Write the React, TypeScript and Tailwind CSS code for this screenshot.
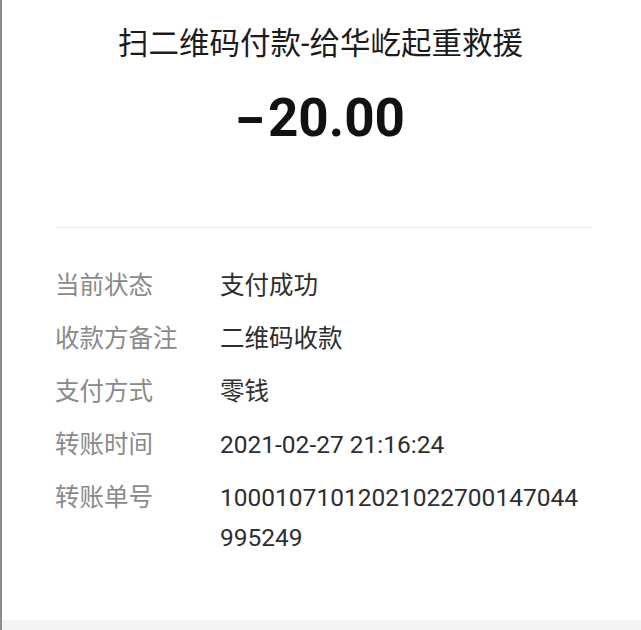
const rows = [
  { label: "当前状态", value: "支付成功" },
  { label: "收款方备注", value: "二维码收款" },
  { label: "支付方式", value: "零钱" },
  { label: "转账时间", value: "2021-02-27 21:16:24" },
  { label: "转账单号", value: "10001071012021022700147044995249" },
];

export default function App() {
  return (
    <div className="w-[641px] h-[630px] bg-white flex flex-col overflow-hidden border-l-2 border-[#8c8c8c] font-['Roboto','Noto_Sans_CJK_SC',sans-serif]">
      <div className="flex-1 flex flex-col">
        <h1 className="mt-[24px] text-center text-[30.5px] leading-[40px] text-[#1c1c1c] font-normal pr-[2px]">
          扫二维码付款-给华屹起重救援
        </h1>
        <div className="mt-[24px] text-center text-[53px] leading-[60px] font-bold text-[#111] pl-[2px]">
          <span className="inline-block scale-x-[1.6] mr-[7px]">-</span>20.00
        </div>
        <div className="mt-[79px] mx-[54px] mr-[50px] h-px bg-[#ececec]" />
        <div className="mt-[38px] ml-[53px] flex flex-col gap-[13px]">
          {rows.map((row) => (
            <div key={row.label} className="flex text-[24.5px] leading-[40px]">
              <div className="w-[165px] shrink-0 text-[#8a8a8a]">{row.label}</div>
              <div className="w-[368px] text-[#2e2e2e] break-all">{row.value}</div>
            </div>
          ))}
        </div>
      </div>
      <div className="h-[10px] bg-[#f4f4f4]" />
    </div>
  );
}
